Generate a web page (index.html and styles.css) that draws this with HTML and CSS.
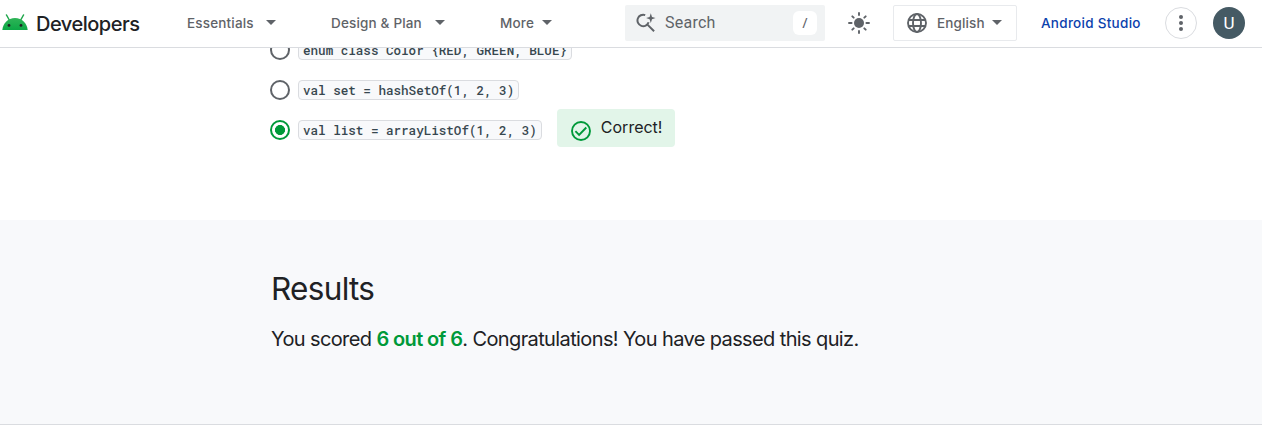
FILE: index.html
```html
<!DOCTYPE html>
<html lang="en">
<head>
<meta charset="utf-8">
<title>Quiz results | Android Developers</title>
<link rel="stylesheet" href="styles.css">
</head>
<body>
<header class="topbar">
  <a class="brand">
    <svg class="brand-icon" width="26" height="17" viewBox="0 0 26 17">
      <defs><linearGradient id="head" x1="0" y1="0" x2="0" y2="1"><stop offset="0" stop-color="#2fb457"/><stop offset="1" stop-color="#0da846"/></linearGradient></defs>
      <path d="M4.5 1 7.3 6M21.5 1l-2.8 5" stroke="#1fa64b" stroke-width="1.5" stroke-linecap="round"/>
      <path d="M.3 16C1 9 6 4 13 4s12 5 12.7 12z" fill="url(#head)"/>
      <circle cx="7" cy="11.4" r="1.4" fill="#202124"/><circle cx="19" cy="11.4" r="1.4" fill="#202124"/>
    </svg>
    <span class="brand-name">Developers</span>
  </a>
  <nav class="nav">
    <a class="nav-item essentials"><span>Essentials</span><i class="caret"></i></a>
    <a class="nav-item design"><span>Design &amp; Plan</span><i class="caret"></i></a>
    <a class="nav-item more"><span>More</span><i class="caret"></i></a>
  </nav>
  <div class="search">
    <svg width="20" height="20" viewBox="0 0 20 20" fill="none" stroke="#5f6368" stroke-width="2">
      <path d="M9.2 2.1A5.7 5.7 0 1 0 12.6 9.2M11.2 11.4l6.9 6.9"/>
      <path d="M14.8.2 16 3.9l3.5 1.2L16 6.3 14.8 10l-1.2-3.7-3.5-1.2 3.5-1.2z" fill="#5f6368" stroke="none"/>
    </svg>
    <span class="search-label">Search</span>
    <kbd class="key">/</kbd>
  </div>
  <svg class="sun" width="24" height="24" viewBox="0 0 24 24">
    <circle cx="12" cy="12" r="5" fill="#5f6368"/>
    <path d="M12 2v2M12 20v2M2 12h2.6M19.4 12H22M5.3 5.3l1.4 1.4M17.3 17.3l1.4 1.4M5.3 18.7l1.4-1.4M17.3 6.7l1.4-1.4" stroke="#5f6368" stroke-width="1.9" stroke-linecap="round"/>
  </svg>
  <div class="language">
    <svg width="20" height="20" viewBox="0 0 20 20" fill="none" stroke="#5f6368" stroke-width="1.9">
      <circle cx="10" cy="10" r="9"/><ellipse cx="10" cy="10" rx="4" ry="9"/><path d="M1.7 7h16.6M1.7 13h16.6"/>
    </svg>
    <span class="language-label">English</span><i class="caret"></i>
  </div>
  <a class="studio"><span>Android Studio</span></a>
  <div class="menu"><svg width="4" height="16" viewBox="0 0 4 16" fill="#5f6368"><circle cx="2" cy="2" r="2"/><circle cx="2" cy="8" r="2"/><circle cx="2" cy="14" r="2"/></svg></div>
  <div class="avatar">U</div>
</header>
<main>
  <section class="answers">
    <div class="answer"><i class="radio"></i><code>enum class Color {RED, GREEN, BLUE}</code></div>
    <div class="answer"><i class="radio"></i><code>val set = hashSetOf(1, 2, 3)</code></div>
    <div class="answer"><i class="radio checked"></i><code>val list = arrayListOf(1, 2, 3)</code>
      <div class="correct">
        <svg width="20" height="20" viewBox="0 0 20 20" fill="none" stroke="#009939" stroke-width="1.9"><circle cx="10" cy="10" r="9"/><path d="m4.4 10.1 3.7 3.7 7.2-7.3"/></svg>
        <span>Correct!</span>
      </div>
    </div>
  </section>
  <section class="results">
    <h2><span>Results</span></h2>
    <p><span>You scored </span><strong>6 out of 6</strong><span class="tail">. Congratulations! You have passed this quiz.</span></p>
  </section>
</main>
</body>
</html>
```
FILE: styles.css
```css
* { box-sizing: border-box; }
body { margin: 0; height: 448px; overflow: hidden; background: #fff; color: #202124; font-family: Inter, Roboto, sans-serif; }
.topbar { display: flex; align-items: center; height: 48px; padding: 0 17px 2px 2px; border-bottom: 1px solid #dadce0; white-space: nowrap; }
.brand { display: flex; align-items: center; width: 185px; }
.brand-icon { display: block; margin-right: 8px; }
.brand-name { font-size: 20px; line-height: 26px; font-weight: 500; letter-spacing: -.5px; padding-top: 3px; }
.nav { display: flex; width: 438px; color: #5f6368; font: 500 13.5px/20px Inter, sans-serif; letter-spacing: .17px; }
.nav-item { display: flex; align-items: center; justify-content: space-between; }
.essentials { width: 89px; margin-right: 55px; }
.design { width: 114px; margin-right: 55px; }
.more { width: 52px; }
.caret { display: block; border: 5px solid transparent; border-top-color: #5f6368; border-bottom: 0; }
.search { display: flex; align-items: center; width: 200px; height: 36px; padding: 0 8px 0 11px; background: #f1f3f4; border-radius: 2px; color: #5f6368; }
.search-label { margin-left: 9px; font: 400 16px/24px Roboto, sans-serif; letter-spacing: .25px; }
.key { display: grid; place-items: center; width: 24px; height: 24px; margin-left: auto; border-radius: 6px; background: #fff; font: 500 13px Roboto, sans-serif; }
.sun { margin: 0 22px; }
.language { display: flex; align-items: center; width: 124px; height: 36px; padding: 0 14px 0 13px; border: 1px solid #e8eaed; border-radius: 2px; color: #5f6368; font: 500 13.5px/20px Inter, sans-serif; letter-spacing: .12px; }
.language-label { margin-left: 10px; }
.language .caret { margin-left: auto; }
.studio { width: 124px; margin-left: 24px; color: #0b41ad; font: 500 13.5px/20px Inter, sans-serif; letter-spacing: .28px; }
.menu, .avatar { display: grid; place-items: center; flex: none; width: 32px; height: 32px; border-radius: 50%; }
.menu { border: 1px solid #dadce0; }
.avatar { margin-left: 16px; background: #455a64; color: #fff; font: 400 17px Roboto, sans-serif; }
.answers { height: 172px; padding-left: 270px; overflow: hidden; }
.answer { display: flex; align-items: center; height: 40px; }
.answer:first-child { margin-top: -18px; }
.radio { display: block; flex: none; width: 20px; height: 20px; margin-right: 8px; border: 2px solid #5f6368; border-radius: 50%; }
.radio.checked { border-color: #009939; background: radial-gradient(circle, #009939 0 4.7px, transparent 5.3px); }
.answer code { height: 20px; padding: 0 4px; border: 1px solid #dadce0; border-radius: 4px; background: #f8f9fb; color: #37474f; font: 500 12.6px/19px "Roboto Mono", "Liberation Mono", monospace; letter-spacing: -.015px; white-space: pre; }
.correct { display: flex; width: 118px; height: 38px; margin: -4px 0 0 15px; padding: 12px 0 0 14px; background: #e2f5e9; border-radius: 4px; font-size: 16px; line-height: 24px; }
.correct svg { flex: none; margin-right: 10px; }
.correct span { margin-top: -6px; letter-spacing: 0; }
.results { height: 205px; padding: 49px 0 0 271px; background: #f8f9fb; border-bottom: 1px solid #dadce0; }
.results h2 { margin: 0 0 18px; font-size: 31.5px; line-height: 40px; font-weight: 400; letter-spacing: -.7px; }
.results p { margin: 0; font-size: 20px; line-height: 24px; letter-spacing: -.62px; white-space: pre; }
.results strong { color: #009939; font-weight: 600; }
```
